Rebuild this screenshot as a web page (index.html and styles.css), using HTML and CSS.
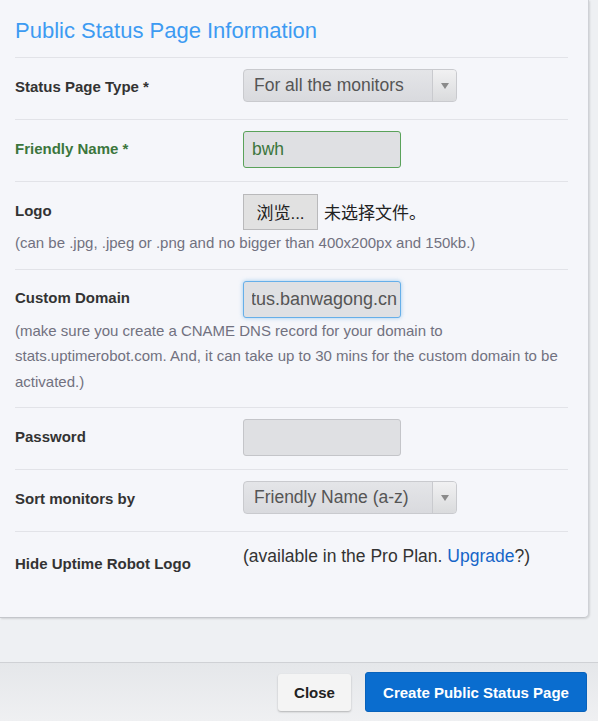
FILE: index.html
```html
<!DOCTYPE html>
<html>
<head>
<meta charset="utf-8">
<link rel="stylesheet" href="styles.css">
</head>
<body>
<div class="page">
  <div class="panel">
    <h2 class="title">Public Status Page Information</h2>
    <div class="row">
      <div class="label">Status Page Type *</div>
      <div class="ctrl">
        <div class="select wide"><span class="sel-text">For all the monitors</span><span class="sel-arrow"></span></div>
      </div>
    </div>
    <div class="row">
      <div class="label green">Friendly Name *</div>
      <div class="ctrl"><div class="input ok">bwh</div></div>
    </div>
    <div class="row">
      <div class="label">Logo</div>
      <div class="ctrl file">
        <span class="browse">浏览...</span><span class="nofile">未选择文件。</span>
      </div>
      <div class="help">(can be .jpg, .jpeg or .png and no bigger than 400x200px and 150kb.)</div>
    </div>
    <div class="row">
      <div class="label">Custom Domain</div>
      <div class="ctrl"><div class="input focus"><div class="scroll"><span>status.banwagong.cn</span></div></div></div>
      <div class="help">(make sure you create a CNAME DNS record for your domain to stats.uptimerobot.com. And, it can take up to 30 mins for the custom domain to be activated.)</div>
    </div>
    <div class="row">
      <div class="label">Password</div>
      <div class="ctrl"><div class="input"></div></div>
    </div>
    <div class="row">
      <div class="label">Sort monitors by</div>
      <div class="ctrl">
        <div class="select wide"><span class="sel-text">Friendly Name (a-z)</span><span class="sel-arrow"></span></div>
      </div>
    </div>
    <div class="row last">
      <div class="label low">Hide Uptime Robot Logo</div>
      <div class="ctrl plain">(available in the Pro Plan. <a class="link">Upgrade</a>?)</div>
    </div>
  </div>
  <div class="footer">
    <button class="btn close">Close</button>
    <button class="btn primary">Create Public Status Page</button>
  </div>
</div>
</body>
</html>
```

FILE: styles.css
```css
html, body {
  margin: 0;
  padding: 0;
}
body {
  background: #eef0f3;
  font-family: "Liberation Sans", Arial, "Noto Sans CJK SC", sans-serif;
  width: 598px;
  height: 721px;
  overflow: hidden;
}
.page {
  display: flex;
  flex-direction: column;
  height: 721px;
}
.panel {
  width: 589px;
  height: 618px;
  box-sizing: border-box;
  background: #f5f6fa;
  border-right: 1px solid #cfd1d6;
  border-bottom: 1px solid #c4c6cb;
  border-bottom-right-radius: 5px;
  box-shadow: 1px 1px 2px rgba(0,0,0,0.12);
  padding: 0 20px 0 15px;
}
.title {
  margin: 0;
  font-weight: normal;
  font-size: 22px;
  color: #3d9bf2;
  height: 58px;
  box-sizing: border-box;
  padding-top: 19px;
  line-height: 24px;
  border-bottom: 1px solid #e2e3e8;
}
.row {
  display: grid;
  grid-template-columns: 228px 1fr;
  align-items: center;
  padding: 11px 0 13px;
  border-bottom: 1px solid #e2e3e8;
}
.row.last {
  border-bottom: none;
  align-items: start;
}
.label {
  font-weight: bold;
  font-size: 15px;
  color: #333;
  margin-top: -3px;
}
.label.green { color: #3c763d; }
.label.low { margin-top: 0; padding-top: 12px; }
.ctrl {
  height: 37px;
  display: flex;
  align-items: flex-start;
}
.ctrl.file { align-items: center; height: 37px; }
.ctrl.plain {
  height: auto;
  display: block;
  font-size: 17.5px;
  line-height: 24px;
  padding-top: 1px;
  color: #333;
}
.link { color: #1565c8; }
.help {
  grid-column: 1 / 3;
  font-size: 15px;
  line-height: 25.5px;
  color: #717180;
}
.select {
  height: 33px;
  box-sizing: border-box;
  border: 1px solid #c9cace;
  border-radius: 4px;
  background: linear-gradient(#e4e5e8, #d9dade);
  display: flex;
  align-items: center;
  font-size: 17.5px;
  color: #555;
}
.select.wide { width: 214px; }
.sel-text {
  flex: 1;
  padding-left: 10px;
}
.sel-arrow {
  width: 23px;
  height: 31px;
  border-left: 1px solid #c9cace;
  background: linear-gradient(#f1f1f2, #dadbdd);
  border-radius: 0 3px 3px 0;
  position: relative;
}
.sel-arrow::after {
  content: "";
  position: absolute;
  left: 8px;
  top: 13px;
  border-left: 4px solid transparent;
  border-right: 4px solid transparent;
  border-top: 6px solid #8a8a8a;
}
.input {
  width: 158px;
  height: 37px;
  box-sizing: border-box;
  border: 1px solid #c4c5c9;
  border-radius: 3px;
  background: #dfe0e3;
  font-size: 17.5px;
  color: #555;
  padding: 0 8px;
  display: flex;
  align-items: center;
  overflow: hidden;
  white-space: nowrap;
}
.input.ok {
  border-color: #5aa25a;
  color: #3c763d;
}
.input.focus {
  border-color: #66afe9;
  box-shadow: 0 0 4px rgba(102,175,233,0.6);
  padding: 0 3px 0 8px;
  font-size: 18px;
}
.scroll {
  width: 100%;
  overflow: hidden;
  display: flex;
  justify-content: flex-end;
}
.browse {
  width: 75px;
  height: 36px;
  box-sizing: border-box;
  border: 1px solid #b9b9bb;
  background: #e1e1e1;
  display: flex;
  align-items: center;
  justify-content: center;
  font-size: 17px;
  color: #222;
}
.nofile {
  margin-left: 6px;
  font-size: 17px;
  color: #222;
}
.footer {
  margin-top: 44px;
  flex: 1;
  border-top: 1px solid #cfd1d5;
  background: linear-gradient(#e5e7ea, #eff0f2);
  display: flex;
  justify-content: flex-end;
  align-items: flex-start;
  padding: 9px 11px 0 0;
  gap: 14px;
}
.btn {
  font-family: "Liberation Sans", Arial, sans-serif;
  font-weight: bold;
  border-radius: 3px;
  cursor: pointer;
}
.btn.close {
  margin-top: 2px;
  width: 73px;
  height: 37px;
  background: #f4f4f4;
  border: none;
  box-shadow: 0 1px 2px rgba(0,0,0,0.25);
  color: #222;
  font-size: 15px;
}
.btn.primary {
  width: 222px;
  height: 40px;
  background: #0a6dcf;
  border: 1px solid #0862bb;
  color: #fff;
  font-size: 15px;
}
```
